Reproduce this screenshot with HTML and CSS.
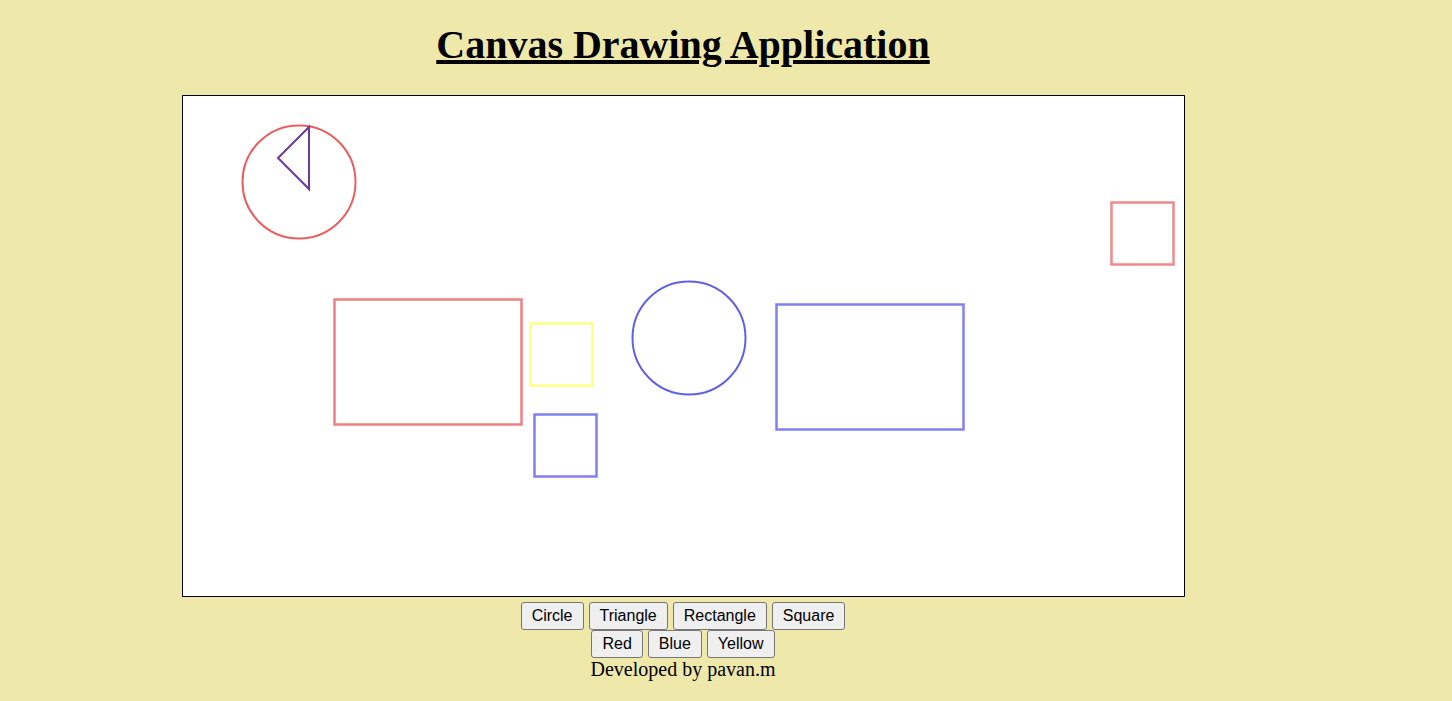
FILE: index.html
```html
<!DOCTYPE html>
<html>
<head>
<meta charset="utf-8">
<title>Canvas Drawing Application</title>
<link rel="stylesheet" href="styles.css">
</head>
<body>
<div class="page">
  <h1 class="title">Canvas Drawing Application</h1>
  <svg class="board" width="1001" height="500" viewBox="0 0 1001 500" xmlns="http://www.w3.org/2000/svg">
    <circle cx="116" cy="86" r="56.5" fill="none" stroke="#ea5e5e" stroke-width="2"/>
    <polygon points="126,31 95,62 126,93" fill="none" stroke="#6a3a9e" stroke-width="2" stroke-linejoin="miter"/>
    <rect x="928.5" y="106.5" width="62" height="62" fill="none" stroke="#f08a8a" stroke-width="2.5"/>
    <rect x="151.5" y="203.5" width="187" height="125" fill="none" stroke="#f08080" stroke-width="2.5"/>
    <rect x="347.5" y="227.5" width="62" height="62" fill="none" stroke="#ffff80" stroke-width="2.5"/>
    <rect x="351.5" y="318.5" width="62" height="62" fill="none" stroke="#8080f0" stroke-width="2.5"/>
    <circle cx="506" cy="242" r="56.5" fill="none" stroke="#6060e6" stroke-width="2"/>
    <rect x="593.5" y="208.5" width="187" height="125" fill="none" stroke="#8080f0" stroke-width="2.5"/>
  </svg>
  <div class="controls">
    <div class="row">
      <button class="btn">Circle</button>
      <button class="btn">Triangle</button>
      <button class="btn">Rectangle</button>
      <button class="btn">Square</button>
    </div>
    <div class="row">
      <button class="btn">Red</button>
      <button class="btn">Blue</button>
      <button class="btn">Yellow</button>
    </div>
  </div>
  <p class="credit">Developed by pavan.m</p>
</div>
</body>
</html>
```

FILE: styles.css
```css
html, body {
  margin: 0;
  padding: 0;
}
body {
  background: #eee8aa;
  font-family: "Liberation Serif", "Times New Roman", serif;
  font-size: 20px;
  color: #000;
}
.page {
  width: 1366px;
  text-align: center;
  padding-top: 2px;
}
.title {
  font-size: 40px;
  font-weight: bold;
  text-decoration: underline;
  margin: 20px 0 27px;
  line-height: 46px;
}
.board {
  display: block;
  margin: 0 auto;
  background: #fff;
  border: 1px solid #000;
}
.controls {
  margin-top: 5px;
  display: flex;
  flex-direction: column;
  align-items: center;
  gap: 0;
}
.row {
  display: flex;
  justify-content: center;
  gap: 5px;
}
.btn {
  font-family: "Liberation Sans", Arial, sans-serif;
  font-size: 16px;
  line-height: 18px;
  color: #000;
  background: #efefef;
  border: 1px solid #767676;
  border-radius: 3px;
  padding: 4px 10px;
  margin: 0;
}
.credit {
  margin: 0;
  line-height: 23px;
}
```
